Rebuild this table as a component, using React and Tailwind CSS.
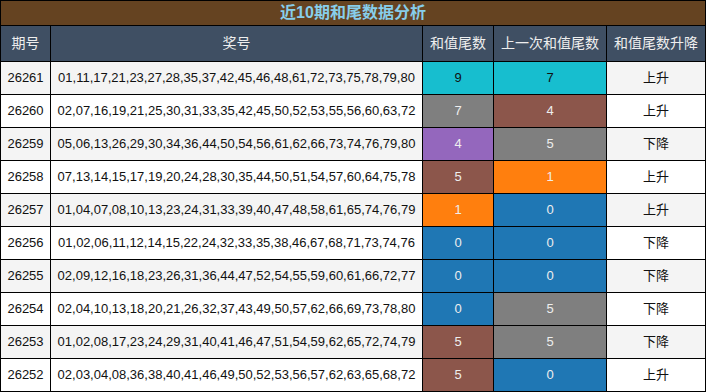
import React from "react";

const COLORS = {
  cyan: "bg-[#17becf] text-[#111]",
  gray: "bg-[#7f7f7f] text-[#eeeeee]",
  brown: "bg-[#8c564b] text-[#eeeeee]",
  purple: "bg-[#9467bd] text-[#eeeeee]",
  orange: "bg-[#ff7f0e] text-[#eeeeee]",
  blue: "bg-[#1f77b4] text-[#eeeeee]",
};

const TAIL_COLOR = { 9: "cyan", 7: "gray", 4: "purple", 5: "brown", 1: "orange", 0: "blue" };
const PREV_COLOR = { 7: "cyan", 4: "brown", 5: "gray", 1: "orange", 0: "blue" };

const ROWS = [
  { id: "26261", nums: "01,11,17,21,23,27,28,35,37,42,45,46,48,61,72,73,75,78,79,80", tail: 9, prev: 7, trend: "上升" },
  { id: "26260", nums: "02,07,16,19,21,25,30,31,33,35,42,45,50,52,53,55,56,60,63,72", tail: 7, prev: 4, trend: "上升" },
  { id: "26259", nums: "05,06,13,26,29,30,34,36,44,50,54,56,61,62,66,73,74,76,79,80", tail: 4, prev: 5, trend: "下降" },
  { id: "26258", nums: "07,13,14,15,17,19,20,24,28,30,35,44,50,51,54,57,60,64,75,78", tail: 5, prev: 1, trend: "上升" },
  { id: "26257", nums: "01,04,07,08,10,13,23,24,31,33,39,40,47,48,58,61,65,74,76,79", tail: 1, prev: 0, trend: "上升" },
  { id: "26256", nums: "01,02,06,11,12,14,15,22,24,32,33,35,38,46,67,68,71,73,74,76", tail: 0, prev: 0, trend: "下降" },
  { id: "26255", nums: "02,09,12,16,18,23,26,31,36,44,47,52,54,55,59,60,61,66,72,77", tail: 0, prev: 0, trend: "下降" },
  { id: "26254", nums: "02,04,10,13,18,20,21,26,32,37,43,49,50,57,62,66,69,73,78,80", tail: 0, prev: 5, trend: "下降" },
  { id: "26253", nums: "01,02,08,17,23,24,29,31,40,41,46,47,51,54,59,62,65,72,74,79", tail: 5, prev: 5, trend: "下降" },
  { id: "26252", nums: "02,03,04,08,36,38,40,41,46,49,50,52,53,56,57,62,63,65,68,72", tail: 5, prev: 0, trend: "上升" },
];

const HEADERS = ["期号", "奖号", "和值尾数", "上一次和值尾数", "和值尾数升降"];

export default function App() {
  return (
    <div className="w-[706px] h-[392px] bg-white font-['Liberation_Sans','Noto_Sans_CJK_SC',sans-serif]">
      <div className="grid grid-cols-[49px_371px_70px_112px_98px] grid-rows-[24px_35px_repeat(10,32px)] gap-px p-px bg-black text-[13px]">
        <div className="col-span-5 bg-[#654321] flex items-center justify-center text-[16px] font-bold text-[#87ceeb]">
          近10期和尾数据分析
        </div>
        {HEADERS.map((h) => (
          <div key={h} className="bg-[#3f4f63] text-[#eeeeee] text-[14px] flex items-center justify-center">
            {h}
          </div>
        ))}
        {ROWS.map((r, i) => {
          const rowBg = i % 2 === 0 ? "bg-[#f4f4f4]" : "bg-white";
          return (
            <React.Fragment key={r.id}>
              <div className={`${rowBg} text-[#111] flex items-center justify-center`}>{r.id}</div>
              <div className={`${rowBg} text-[#111] flex items-center justify-center`}>{r.nums}</div>
              <div className={`${COLORS[TAIL_COLOR[r.tail]]} flex items-center justify-center`}>{r.tail}</div>
              <div className={`${COLORS[PREV_COLOR[r.prev]]} flex items-center justify-center`}>{r.prev}</div>
              <div className={`${rowBg} text-[#111] flex items-center justify-center`}>{r.trend}</div>
            </React.Fragment>
          );
        })}
      </div>
    </div>
  );
}
